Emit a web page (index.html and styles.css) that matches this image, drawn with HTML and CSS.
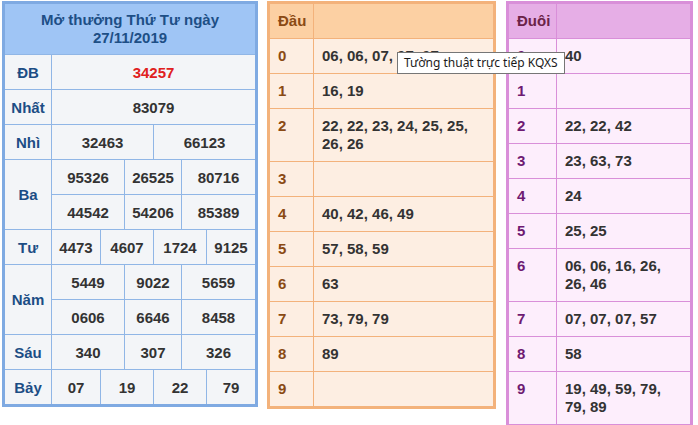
FILE: index.html
```html
<!DOCTYPE html>
<html lang="vi">
<head>
<meta charset="utf-8">
<title>KQXS</title>
<link rel="stylesheet" href="styles.css">
</head>
<body>
<div class="wrap">
  <div class="kq">
    <div class="kq-head">Mở thưởng Thứ Tư ngày<br>27/11/2019</div>
    <div class="lbl">ĐB</div><div class="c s6 red">34257</div>
    <div class="lbl">Nhất</div><div class="c s6">83079</div>
    <div class="lbl">Nhì</div><div class="c s3">32463</div><div class="c s3">66123</div>
    <div class="lbl r2">Ba</div><div class="c s2">95326</div><div class="c s2">26525</div><div class="c s2">80716</div>
    <div class="c s2">44542</div><div class="c s2">54206</div><div class="c s2">85389</div>
    <div class="lbl">Tư</div><div class="c">4473</div><div class="c s2">4607</div><div class="c s2">1724</div><div class="c">9125</div>
    <div class="lbl r2">Năm</div><div class="c s2">5449</div><div class="c s2">9022</div><div class="c s2">5659</div>
    <div class="c s2">0606</div><div class="c s2">6646</div><div class="c s2">8458</div>
    <div class="lbl">Sáu</div><div class="c s2">340</div><div class="c s2">307</div><div class="c s2">326</div>
    <div class="lbl">Bảy</div><div class="c">07</div><div class="c s2">19</div><div class="c s2">22</div><div class="c">79</div>
  </div>

  <div class="lt dau">
    <div class="h">Đầu</div><div class="h"></div>
    <div class="k">0</div><div class="v">06, 06, 07, 07, 07</div>
    <div class="k">1</div><div class="v">16, 19</div>
    <div class="k">2</div><div class="v">22, 22, 23, 24, 25, 25, 26, 26</div>
    <div class="k">3</div><div class="v"></div>
    <div class="k">4</div><div class="v">40, 42, 46, 49</div>
    <div class="k">5</div><div class="v">57, 58, 59</div>
    <div class="k">6</div><div class="v">63</div>
    <div class="k">7</div><div class="v">73, 79, 79</div>
    <div class="k">8</div><div class="v">89</div>
    <div class="k">9</div><div class="v"></div>
  </div>

  <div class="lt duoi">
    <div class="h">Đuôi</div><div class="h"></div>
    <div class="k">0</div><div class="v">40</div>
    <div class="k">1</div><div class="v"></div>
    <div class="k">2</div><div class="v">22, 22, 42</div>
    <div class="k">3</div><div class="v">23, 63, 73</div>
    <div class="k">4</div><div class="v">24</div>
    <div class="k">5</div><div class="v">25, 25</div>
    <div class="k">6</div><div class="v">06, 06, 16, 26, 26, 46</div>
    <div class="k">7</div><div class="v">07, 07, 07, 57</div>
    <div class="k">8</div><div class="v">58</div>
    <div class="k">9</div><div class="v">19, 49, 59, 79, 79, 89</div>
  </div>
</div>
<div class="tip">Tường thuật trực tiếp KQXS</div>
</body>
</html>
```
FILE: styles.css
```css
html, body {
  margin: 0;
  padding: 0;
  background: #ffffff;
}
body {
  font-family: "Liberation Sans", Arial, sans-serif;
  font-weight: bold;
  font-size: 15px;
  color: #333333;
  position: relative;
  height: 425px;
  overflow: hidden;
}
.wrap {
  display: flex;
  align-items: flex-start;
  padding: 1px 0 0 2px;
  gap: 9px;
}
.kq {
  width: 250px;
  border: 3px solid #7faae2;
  background: #90b6e6;
  display: grid;
  grid-template-columns: 46px 48px 23px 28px 27px 24px 48px;
  grid-template-rows: 50px;
  grid-auto-rows: 34px;
  gap: 1px;
}
.kq-head {
  grid-column: 1 / -1;
  background: #9fc5f5;
  color: #1d4f86;
  text-align: center;
  line-height: 18px;
  display: flex;
  align-items: center;
  justify-content: center;
}
.kq > .c, .kq > .lbl {
  background: #f3f5f8;
  display: flex;
  align-items: center;
  justify-content: center;
}
.kq > .lbl {
  color: #1c4d85;
  grid-column: 1;
}
.kq .r2 { grid-row: span 2; }
.kq .s2 { grid-column: span 2; }
.kq .s3 { grid-column: span 3; }
.kq .s6 { grid-column: span 6; }
.kq .red { color: #e02020; }

.lt {
  display: grid;
  gap: 1px;
  border: 3px solid;
  line-height: 18px;
}
.lt > div {
  padding: 8px 8px;
  min-height: 18px;
}
.lt > .h {
  min-height: 17px;
}
.dau {
  width: 223px;
  grid-template-columns: 43px 179px;
  border-color: #f3b27b;
  background: #f3b27b;
}
.dau > .h { background: #fcd0a3; color: #8a4a14; }
.dau > .k { background: #fdeee2; color: #8a4a14; }
.dau > .v { background: #fdeee2; }

.duoi {
  width: 181px;
  margin-left: 1px;
  grid-template-columns: 47px 133px;
  border-color: #d98fd9;
  background: #d98fd9;
}
.duoi > .h { background: #e6aee6; color: #6b2348; }
.duoi > .k { background: #fdeefc; color: #6e1a72; }
.duoi > .v { background: #fdeefc; }

.tip {
  position: absolute;
  left: 397px;
  top: 52px;
  height: 20px;
  padding: 0 6px;
  background: #ffffff;
  border: 1px solid #767676;
  font-family: "Noto Sans", "Open Sans", sans-serif;
  font-weight: normal;
  font-size: 12px;
  line-height: 20px;
  color: #1a1a1a;
  white-space: nowrap;
}
```
